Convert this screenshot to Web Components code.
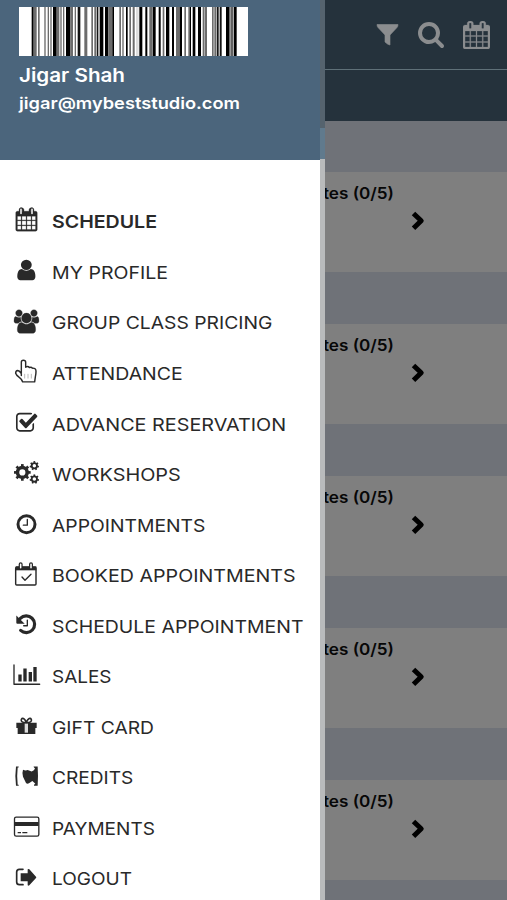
<!DOCTYPE html>
<html lang="en"><head><meta charset="utf-8"><title>Schedule</title>
<style>html,body{margin:0;width:507px;height:900px;overflow:hidden;background:#7f7f7f;font-family:Inter,"Liberation Sans",sans-serif}</style></head>
<body><studio-app></studio-app>
<script>
const define=(name,render)=>customElements.define(name,class extends HTMLElement{
  connectedCallback(){if(!this.shadowRoot)this.attachShadow({mode:'open'}).innerHTML=render(this);}
});
const cal='M192 1664h288v-288h-288v288zm352 0h320v-288h-320v288zm-352-352h288v-320h-288v320zm352 0h320v-320h-320v320zm-352-384h288v-288h-288v288zm736 736h320v-288h-320v288zm-384-736h320v-288h-320v288zm768 736h288v-288h-288v288zm-384-352h320v-320h-320v320zm-352-864v-288q0-13-9.5-22.5t-22.5-9.5h-64q-13 0-22.5 9.5t-9.5 22.5v288q0 13 9.5 22.5t22.5 9.5h64q13 0 22.5-9.5t9.5-22.5zm736 864h288v-320h-288v320zm-384-384h320v-288h-320v288zm384 0h288v-288h-288v288zm32-480v-288q0-13-9.5-22.5t-22.5-9.5h-64q-13 0-22.5 9.5t-9.5 22.5v288q0 13 9.5 22.5t22.5 9.5h64q13 0 22.5-9.5t9.5-22.5zm384-64v1280q0 52-38 90t-90 38h-1408q-52 0-90-38t-38-90v-1280q0-52 38-90t90-38h128v-96q0-66 47-113t113-47h64q66 0 113 47t47 113v96h384v-96q0-66 47-113t113-47h64q66 0 113 47t47 113v96h128q52 0 90 38t38 90z';
const search='M1216 832q0-185-131.5-316.5t-316.5-131.5-316.5 131.5-131.5 316.5 131.5 316.5 316.5 131.5 316.5-131.5 131.5-316.5zm512 832q0 52-38 90t-90 38q-54 0-90-38l-343-342q-179 124-399 124-143 0-273.5-55.5t-225-150-150-225-55.5-273.5 55.5-273.5 150-225 225-150 273.5-55.5 273.5 55.5 225 150 150 225 55.5 273.5q0 220-124 399l343 343q37 37 37 90z';
const user='M1536 1399q0 109-62.5 187t-150.5 78h-854q-88 0-150.5-78t-62.5-187q0-85 8.5-160.5t31.5-152 58.5-131 94-89 134.5-34.5q131 128 313 128t313-128q76 0 134.5 34.5t94 89 58.5 131 31.5 152 8.5 160.5zm-256-887q0 159-112.5 271.5t-271.5 112.5-271.5-112.5-112.5-271.5 112.5-271.5 271.5-112.5 271.5 112.5 112.5 271.5z';
const users='M657 896q-162 5-265 128h-134q-82 0-138-40.5t-56-118.5q0-353 124-353 6 0 43.5 21t97.5 42.5 119 21.5q67 0 133-23-5 37-5 66 0 139 81 256zm1071 637q0 120-73 189.5t-194 69.5h-874q-121 0-194-69.5t-73-189.5q0-53 3.5-103.5t14-109 26.5-108.5 43-97.5 62-81 85.5-53.5 111.5-20q10 0 43 21.5t73 48 107 48 135 21.5 135-21.5 107-48 73-48 43-21.5q61 0 111.5 20t85.5 53.5 62 81 43 97.5 26.5 108.5 14 109 3.5 103.5zm-1024-1277q0 106-75 181t-181 75-181-75-75-181 75-181 181-75 181 75 75 181zm704 384q0 159-112.5 271.5t-271.5 112.5-271.5-112.5-112.5-271.5 112.5-271.5 271.5-112.5 271.5 112.5 112.5 271.5zm576 225q0 78-56 118.5t-138 40.5h-134q-103-123-265-128 81-117 81-256 0-29-5-66 66 23 133 23 59 0 119-21.5t97.5-42.5 43.5-21q124 0 124 353zm-128-609q0 106-75 181t-181 75-181-75-75-181 75-181 181-75 181 75 75 181z';
const check='M1472 930v318q0 119-84.5 203.5t-203.5 84.5h-832q-119 0-203.5-84.5t-84.5-203.5v-832q0-119 84.5-203.5t203.5-84.5h832q63 0 117 25 15 7 18 23 3 17-9 29l-49 49q-10 10-23 10-3 0-9-2-23-6-45-6h-832q-66 0-113 47t-47 113v832q0 66 47 113t113 47h832q66 0 113-47t47-113v-254q0-13 9-22l64-64q10-10 23-10 6 0 12 3 20 8 20 29zm231-489l-814 814q-24 24-57 24t-57-24l-430-430q-24-24-24-57t24-57l110-110q24-24 57-24t57 24l263 263 647-647q24-24 57-24t57 24l110 110q24 24 24 57t-24 57z';
// A cog: ring with n teeth around it.
const gear=(x,y,r,w,n,t)=>`<circle cx="${x}" cy="${y}" r="${r}" fill="none" stroke="currentColor" stroke-width="${w}"/>`+Array.from({length:n},(_,i)=>`<rect x="${x-t/2}" y="${y-r-w/2-t*.65}" width="${t}" height="${t}" fill="currentColor" transform="rotate(${i*360/n} ${x} ${y})"/>`).join('');
const L='fill="none" stroke="currentColor" stroke-linecap="round" stroke-linejoin="round"';
// [label, text left, text right, y of the icon's drawing space, icon markup]
const items=[
['SCHEDULE',53,157,200,`<path transform="translate(44.8 25) scale(.0387 .039)" d="${cal}" stroke="currentColor" stroke-width="22"/><path d="M49 37h62v10H49z"/><path d="M63 29v13M96 29v13" ${L} stroke-width="10"/><path d="M63 29v13M96 29v13" stroke="#fff" stroke-width="4.5" stroke-linecap="round"/>`],
['MY PROFILE',53,168,200,`<path transform="translate(41 174) scale(.0424 .0402)" d="${user}"/>`],
['GROUP CLASS PRICING',53,272.4,200,`<path transform="translate(39.5 328) scale(.039 .0395)" d="${users}" stroke="currentColor" stroke-width="22"/>`],
['ATTENDANCE',52.6,182.3,350,`<path ${L} stroke-width="4.3" d="M64 77V37q0-6 6-6 7 0 7 6v15q7-4 11 1 6-3 9 2 11-1 11 9 0 9-2 17l-2 15H68q-4-9-11-14-8-6-10-12 0-7 6-8 5 0 11 9"/><path d="M74 72v14M84 72v14M94 72v14" stroke="#999" stroke-width="2"/>`],
['ADVANCE RESERVATION',52.6,285.7,350,`<path transform="translate(45.5 182) scale(.0385 .0405)" d="${check}"/>`],
['WORKSHOPS',52.8,180.6,350,gear(67,368,14.5,10.5,8,8)+gear(103,348,8,5.5,7,5)+gear(103,388,8,5.5,7,5)],
['APPOINTMENTS',52.6,205,500,`<circle cx="79.5" cy="72" r="25.5" ${L} stroke-width="9"/><path d="M82 58v17H70" ${L} stroke-width="4"/>`],
['BOOKED APPOINTMENTS',53,295.5,500,`<rect x="47" y="203" width="61" height="53" rx="3" ${L} stroke-width="4.3"/><path d="M47 200h62v12H47z"/><path d="M62 194v10M93 194v10" ${L} stroke-width="12"/><path d="M62 194v10M93 194v10" stroke="#fff" stroke-width="4.5" stroke-linecap="round"/><path d="M66 232l9 10 18-18" ${L} stroke-width="4"/>`],
['SCHEDULE APPOINTMENT',53,303.5,500,`<path d="M61 355A25 25 0 1 1 62 391" ${L} stroke-width="9.5"/><path d="M49 346v22q0 3 3 3h22z"/><path d="M82 360v17H71" ${L} stroke-width="4"/>`],
['SALES',53,111.5,650,`<path d="M42 46v58h77" ${L} stroke-width="4"/><path d="M55 75h10v21H55zM70 57h10v39H70zM86 67h10v29H86zM100 52h10v44h-10z"/>`],
['GIFT CARD',53,154,650,`<path d="M49 218h61v16h-4v18H53v-18h-4z"/><path d="M74 220h10v28H74z" fill="#ddd"/><path d="M79 218q-18 0-15-10 5-9 15 8 10-17 15-8 3 10-15 10" ${L} stroke-width="4.8"/>`],
['CREDITS',53,133.3,650,`<path d="M56 351h-8q-4 29 0 58h8v-3h-3q-3-26 0-52h3z"/><path d="M101 351h12q2 29 0 58h-11v-3l4-3q-5-4-9-8l-9 6q-6 4-10 0l-9-19q-3-14 0-21 7 3 14 1l12 4q8-3 10-9l-4-4z"/>`],
['PAYMENTS',53.4,155.3,800,`<rect x="43.5" y="51.5" width="73" height="57" rx="5" ${L} stroke-width="4"/><path d="M44 66h72v12H44zM53 96h10v4H53zM67 96h15v4H67z"/>`],
['LOGOUT',53.4,132.5,800,`<path d="M69 207H58q-8 0-8 8v30q0 8 8 8h11" ${L} stroke-width="5"/><path d="M62 219h21v-12q3-2 5 0l20 22q2 2 0 4l-20 22q-2 2-5 0v-12H62z"/>`]];

// Text set to a fixed measure, so labels keep their wide letterforms.
define('fit-text',e=>{const w=+e.getAttribute('w'),s=+e.getAttribute('size'),h=Math.ceil(s*1.5);
return `<style>:host{display:block;width:${w}px;height:${h}px}svg{display:block;overflow:visible}text{font:${e.getAttribute('weight')||400} ${s}px Inter,"Liberation Sans",sans-serif;fill:currentColor}</style><svg width="${w}" height="${h}"><text x="0" y="${s*1.1}" textLength="${w}" lengthAdjust="spacingAndGlyphs">${e.getAttribute('text')}</text></svg>`});

define('menu-row',e=>{const i=+e.getAttribute('index'),[t,l,r,o,m]=items[i],y=(221.5+50.55*i-15-o)*3;
return `<style>:host{display:flex;align-items:center;height:50.55px;padding-left:12px;color:#292929}.icon{width:30px;height:30px;flex:none;fill:currentColor;overflow:visible}fit-text{margin:2.8px 0 0 ${l-43}px}</style>
<svg class="icon" viewBox="36 ${y} 90 90">${m}</svg><fit-text text="${t}" w="${r-l+1}" size="17.6" weight="${i?400:600}"></fit-text>`});

define('bar-code',()=>{
const a=[[53,6,0],[59,9,1],[72,5,1],[91,4,1],[101,4,1],[109,4,1],[117,11,0],[128,8,1],[139,4,1],[147,4,1],[156,13,0],[169,8,1],[182,4,1],[191,8,2],[211,9,1],[232,5,1],[241,5,1],[248,5,2],[257,11,0],[273,10,0],[283,12,1],[295,5,0],[316,5,1],[325,4,1],[336,5,0],[346,5,1]].map(([x,w,c])=>[x/3+14,w/3,c]);
const b=[[8,6,1],[18,8,3],[28,9,0],[46,6,0],[58,9,1],[68,9,0],[86,6,0],[98,5,1],[108,10,0],[126,6,0],[138,11,1],[149,7,0],[163,5,1],[175,4,1],[179,4,0],[188,8,0],[204,9,0],[218,5,1],[224,7,1],[246,5,1],[253,5,1],[260,6,2],[269,6,2],[288,9,0],[297,5,1],[304,4,2],[311,9,0]].map(([x,w,c])=>[x/3+130,w/3,c]);
const col=['#000','#6c6c6c','#141414','#ddd'];
return `<style>:host{display:block;width:229px;height:49px;background:#fff}svg{display:block}</style><svg width="229" height="49" viewBox="19 0 229 49">${[...a,...b].map(([x,w,c])=>`<rect x="${x.toFixed(2)}" width="${w.toFixed(2)}" height="49" fill="${col[c]}"/>`).join('')}</svg>`});

define('side-drawer',()=>`<style>:host{display:flex;flex-direction:column;box-sizing:border-box;width:325px;height:900px;background:#fff;overflow:hidden;position:relative}
header{box-sizing:border-box;height:159.5px;padding:7px 0 0 19px;background:#4b657c;color:#fff;flex:none}
.name{margin-top:5.6px}.mail{margin-top:1px}nav{padding-top:36.7px}
.edge{position:absolute;right:0;top:0;width:5px;height:900px;background:linear-gradient(#55636e 0 128px,#607a8d 128px 159.5px,#b9bbbc 159.5px)}</style>
<header><bar-code></bar-code><fit-text class="name" text="Jigar Shah" w="106" size="18.5" weight="600"></fit-text><fit-text class="mail" text="jigar@mybeststudio.com" w="221" size="16.5" weight="600"></fit-text></header>
<nav>${items.map((_,i)=>`<menu-row index="${i}"></menu-row>`).join('')}</nav><div class="edge"></div>`);

define('class-card',()=>`<style>:host{display:block;box-sizing:border-box;height:100.3px;margin-bottom:51.8px;background:#7f7f7f;color:#070707;padding:9px 0 0 322.5px}svg{display:block;margin:5px 0 0 86px}</style>
<fit-text text="tes (0/5)" w="71" size="16" weight="600"></fit-text><svg width="18" height="22"><path d="M4.5 3.5l7.7 7.3-7.7 7.5" fill="none" stroke="#000" stroke-width="5" stroke-linejoin="round"/></svg>`);

define('top-bar',()=>`<style>:host{display:block;height:121px;background:#25323c;box-sizing:border-box;color:#8b8d8f}
.tools{display:flex;align-items:center;height:69px;border-bottom:1.5px solid #5f7078;padding-left:376px;gap:18px}svg{fill:currentColor;display:block}</style>
<div class="tools"><svg width="23" height="24" viewBox="0 0 23 24"><path d="M1 1.5h21q0 2-1 3l-7 7.5v10q-2 0-5-3v-7L2 4.5Q1 3.5 1 1.5z" stroke="currentColor" stroke-width=".6"/></svg>
<svg width="26" height="26" viewBox="64 128 1664 1664" style="margin-left:1px" preserveAspectRatio="none"><path d="${search}"/></svg>
<svg width="27" height="28" viewBox="64 0 1664 1792" preserveAspectRatio="none" style="margin-left:1px"><path d="${cal}" stroke="currentColor" stroke-width="15"/></svg></div>`);

define('studio-app',()=>`<style>:host{display:block;position:relative;width:507px;height:900px;overflow:hidden;background:#6f7278}main{padding-top:50.8px}side-drawer{position:absolute;left:0;top:0}</style>
<top-bar></top-bar><main>${'<class-card></class-card>'.repeat(5)}</main><side-drawer></side-drawer>`);
</script></body></html>
